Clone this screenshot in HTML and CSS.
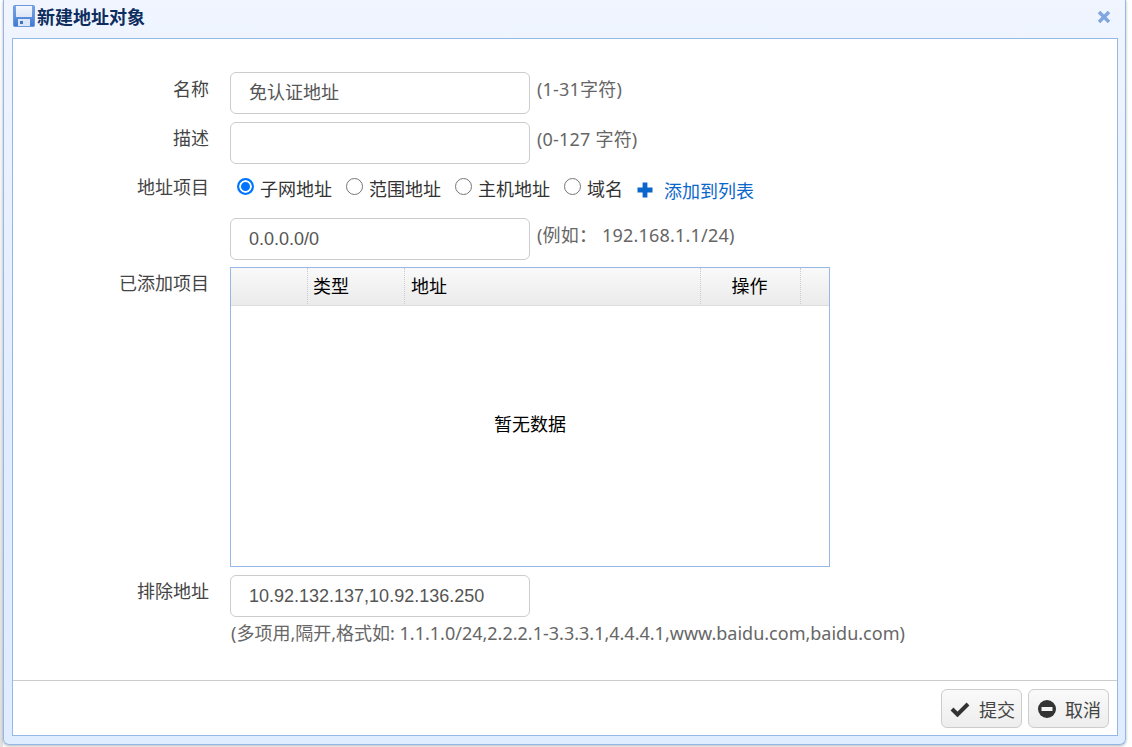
FILE: index.html
```html
<!DOCTYPE html>
<html lang="zh-CN">
<head>
<meta charset="utf-8">
<title>新建地址对象</title>
<link rel="stylesheet" href="styles.css">
</head>
<body>
<div class="window">
  <div class="titlebar">
    <svg class="save-icon" width="22" height="22" viewBox="0 0 22 22">
      <defs>
        <linearGradient id="disk" x1="0" y1="0" x2="0" y2="1"><stop offset="0" stop-color="#7ea9e8"/><stop offset="1" stop-color="#3f78d2"/></linearGradient>
        <linearGradient id="paper" x1="0" y1="0" x2="0" y2="1"><stop offset="0" stop-color="#f4f7fd"/><stop offset="1" stop-color="#dfe6f6"/></linearGradient>
      </defs>
      <rect x="0.5" y="0.5" width="21" height="21" rx="1" fill="url(#disk)" stroke="#6d97dc"/>
      <rect x="3" y="1" width="16" height="11" fill="url(#paper)"/>
      <rect x="5" y="14" width="12" height="7" fill="#dbe6f8"/>
      <rect x="7" y="16" width="3" height="3" fill="#3f74c4"/>
    </svg>
    <span class="title">新建地址对象</span>
    <svg class="close-icon" width="14" height="14" viewBox="0 0 14 14"><path d="M2 2L12 12M12 2L2 12" stroke="#7fa6e0" stroke-width="3.4"/></svg>
  </div>
  <div class="panel">
    <form class="form">
      <div class="row row-name">
        <label class="label">名称</label>
        <div class="field"><div class="input">免认证地址</div><span class="hint">(1-31字符)</span></div>
      </div>
      <div class="row row-desc">
        <label class="label">描述</label>
        <div class="field"><div class="input"></div><span class="hint">(0-127 字符)</span></div>
      </div>
      <div class="row row-type">
        <label class="label">地址项目</label>
        <div class="radios">
          <span class="radio-item"><span class="radio checked"></span>子网地址</span>
          <span class="radio-item"><span class="radio"></span>范围地址</span>
          <span class="radio-item"><span class="radio"></span>主机地址</span>
          <span class="radio-item"><span class="radio"></span>域名</span>
          <a class="add-link"><svg width="16" height="16" viewBox="0 0 16 16"><path d="M8 0.5V15.5M0.5 8H15.5" stroke="#0b66cc" stroke-width="4.8"/></svg><span>添加到列表</span></a>
        </div>
      </div>
      <div class="row row-addr">
        <span class="label"></span>
        <div class="field"><div class="input">0.0.0.0/0</div><span class="hint">(例如： 192.168.1.1/24)</span></div>
      </div>
      <div class="row row-table">
        <label class="label">已添加项目</label>
        <div class="grid">
          <div class="grid-head">
            <div class="col col-check"></div>
            <div class="col col-type">类型</div>
            <div class="col col-addr">地址</div>
            <div class="col col-op">操作</div>
            <div class="col col-end"></div>
          </div>
          <div class="grid-empty">暂无数据</div>
        </div>
      </div>
      <div class="row row-exclude">
        <label class="label">排除地址</label>
        <div class="field"><div class="input">10.92.132.137,10.92.136.250</div></div>
      </div>
      <div class="row">
        <span class="label"></span>
        <div class="hint hint-wide">(多项用,隔开,格式如: 1.1.1.0/24,2.2.2.1-3.3.3.1,4.4.4.1,www.baidu.com,baidu.com)</div>
      </div>
    </form>
    <div class="footer">
      <button class="btn" type="button"><svg width="20" height="16" viewBox="0 0 20 16"><path d="M2 8L7.5 13.5L18 3" fill="none" stroke="#333" stroke-width="4"/></svg>提交</button>
      <button class="btn" type="button"><svg width="18" height="18" viewBox="0 0 18 18"><circle cx="9" cy="9" r="9" fill="#333"/><rect x="3.5" y="7" width="11" height="4" fill="#f3f3f3"/></svg>取消</button>
    </div>
  </div>
</div>
</body>
</html>
```
FILE: styles.css
```css
* { box-sizing: border-box; }
html, body { margin: 0; padding: 0; }
body {
  height: 747px;
  background: linear-gradient(#fff, #e2e2e2) left top / 3px 100% no-repeat #fff;
  overflow: hidden;
  font-family: "Liberation Sans", "Noto Sans CJK SC", sans-serif;
  font-size: 18px;
  color: #333;
}
.window {
  width: 1123px;
  height: 745px;
  margin-left: 3px;
  padding: 0 7px 8px 8px;
  background: linear-gradient(#f0f5ff, #e0ecff 60%);
  border: 1px solid #95b8e7;
  border-top: 0;
  border-radius: 0 0 6px 6px;
  box-shadow: 0 1px 3px rgba(0, 0, 0, .3);
  display: flex;
  flex-direction: column;
}
.titlebar {
  height: 38px;
  flex: none;
  display: flex;
  align-items: center;
  padding: 0 7px 6px 1px;
}
.save-icon { flex: none; margin-right: 2px; }
.title {
  font-weight: 700;
  font-size: 18px;
  color: #0e2d5f;
  flex: 1;
}
.close-icon { flex: none; margin-top: 2px; }
.panel {
  flex: 1;
  background: #fff;
  border: 1px solid #95b8e7;
  display: flex;
  flex-direction: column;
}
.form {
  flex: 1;
  padding-top: 33px;
}
.row {
  display: grid;
  grid-template-columns: 196px 1fr;
  column-gap: 21px;
  align-items: start;
}
.label {
  text-align: right;
  color: #444;
  line-height: 24px;
  padding-top: 6px;
}
.field { display: flex; align-items: flex-start; }
.input {
  width: 300px;
  height: 42px;
  border: 1px solid #ccc;
  border-radius: 6px;
  padding: 0 18px;
  line-height: 40px;
  color: #555;
  background: #fff;
}
.hint {
  font-family: "Noto Sans", "Noto Sans CJK SC", sans-serif;
  color: #666;
  line-height: 24px;
  margin: 5px 0 0 7px;
  letter-spacing: .2px;
}
.row-name { margin-bottom: 8px; }
.row-desc { margin-bottom: 9px; }
.row-desc .label { padding-top: 5px; }
.row-type { height: 45px; }
.row-type .label { padding-top: 0; margin-top: 3px; }
.row-addr { margin-bottom: 7px; }
.row-table { margin-bottom: 8px; }
.row-table .label { padding-top: 5px; }
.row-exclude { margin-bottom: 4px; }
.row-exclude .label { padding-top: 5px; }
.radios {
  display: flex;
  align-items: center;
  height: 30px;
  color: #333;
  padding-left: 7px;
}
.radio-item { display: flex; align-items: center; margin-right: 14px; }
.radio {
  width: 17px;
  height: 17px;
  border: 1.5px solid #767676;
  border-radius: 50%;
  margin-right: 6px;
  margin-top: -3px;
  background: #fff;
}
.radio.checked {
  border: 2px solid #0075ff;
  background: #0075ff;
  box-shadow: inset 0 0 0 2px #fff;
}
.add-link {
  display: flex;
  align-items: center;
  color: #0b66cc;
}
.add-link svg { margin-right: 11px; margin-top: 3px; }
.add-link span { margin-top: 4px; }
.grid {
  width: 600px;
  height: 300px;
  border: 1px solid #95b8e7;
  display: flex;
  flex-direction: column;
}
.grid-head {
  height: 38px;
  flex: none;
  display: flex;
  background: linear-gradient(#f9f9f9, #ebebeb);
  border-bottom: 1px solid #ddd;
  color: #000;
  line-height: 39px;
}
.col { border-right: 1px dotted #ccc; height: 36px; flex: none; padding-left: 5px; }
.col-check { width: 77px; }
.col-type { width: 97px; }
.col-addr { width: 296px; padding-left: 6px; }
.col-op { width: 100px; text-align: center; padding: 0 2px 0 0; }
.col-end { width: 28px; border-right: 0; }
.grid-empty {
  flex: 1;
  display: flex;
  align-items: center;
  justify-content: center;
  color: #000;
  padding-bottom: 26px;
}
.hint-wide { margin: 0 0 0 1px; letter-spacing: 0; }
.footer {
  height: 55px;
  flex: none;
  border-top: 1px solid #ccc;
  display: flex;
  justify-content: flex-end;
  gap: 6px;
  padding: 8px 8px 0 0;
}
.btn {
  width: 81px;
  height: 39px;
  border: 1px solid #ccc;
  border-radius: 6px;
  background: linear-gradient(#fafafa, #ededed);
  font: inherit;
  color: #444;
  display: flex;
  align-items: center;
  justify-content: center;
  gap: 9px;
  padding: 0 0 0 2px;
}
```
